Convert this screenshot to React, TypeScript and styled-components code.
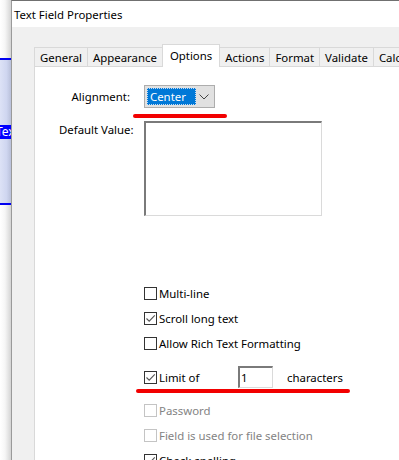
import React from 'react';
import styled, { createGlobalStyle } from 'styled-components';

const GlobalStyle = createGlobalStyle`
  body {
    margin: 0;
    font-family: "Noto Sans", "Open Sans", sans-serif;
    font-size: 11.4px;
    color: #000;
  }
`;

const tabs = ['General', 'Appearance', 'Options', 'Actions', 'Format', 'Validate', 'Calculate'];

const CheckMark = () => (
  <svg width="11" height="11" viewBox="0 0 11 11">
    <path d="M1.5 5.5 L4.2 8.2 L9.8 2.4" fill="none" stroke="#555" strokeWidth="1.1" />
  </svg>
);

const Check = ({ label, checked, disabled }: { label: string; checked?: boolean; disabled?: boolean }) => (
  <>
    <Box $disabled={disabled}>{checked && <CheckMark />}</Box>
    <CheckText $disabled={disabled}>{label}</CheckText>
  </>
);

const App = () => {
  return (
    <Screen>
      <GlobalStyle />
      <BackStrip>
        <Selection>
          <TagLabel>Text</TagLabel>
        </Selection>
      </BackStrip>
      <Dialog>
        <TitleBar>Text Field Properties</TitleBar>
        <Body>
          <TabRow>
            {tabs.map((t) => (
              <Tab key={t} $active={t === 'Options'}>
                {t}
              </Tab>
            ))}
          </TabRow>
          <Panel>
            <FormGrid>
              <FieldLabel>Alignment:</FieldLabel>
              <SelectWrap>
                <Select>
                  <SelectValue>Center</SelectValue>
                  <Chevron>
                    <svg width="10" height="6" viewBox="0 0 10 6">
                      <path d="M0.5 0.5 L5 5 L9.5 0.5" fill="none" stroke="#444" strokeWidth="1" />
                    </svg>
                  </Chevron>
                </Select>
                <RedMark $left={-11} $top={29} $width={94} />
              </SelectWrap>
              <FieldLabel $top>Default Value:</FieldLabel>
              <TextBox />
            </FormGrid>
            <CheckList>
              <CheckRow>
                <Check label="Multi-line" />
              </CheckRow>
              <CheckRow>
                <Check label="Scroll long text" checked />
              </CheckRow>
              <CheckRow>
                <Check label="Allow Rich Text Formatting" />
              </CheckRow>
              <CheckRow $tall>
                <Box>
                  <CheckMark />
                </Box>
                <LimitText>Limit of</LimitText>
                <NumberInput>1</NumberInput>
                <Suffix>characters</Suffix>
                <RedMark $left={-8} $top={33} $width={214} />
              </CheckRow>
              <CheckRow>
                <Check label="Password" disabled />
              </CheckRow>
              <CheckRow>
                <Check label="Field is used for file selection" disabled />
              </CheckRow>
              <CheckRow>
                <Check label="Check spelling" checked />
              </CheckRow>
            </CheckList>
          </Panel>
        </Body>
      </Dialog>
    </Screen>
  );
};

export default App;

const Screen = styled.div`
  display: flex;
  width: 399px;
  height: 460px;
  overflow: hidden;
`;

const BackStrip = styled.div`
  width: 11px;
  flex-shrink: 0;
  overflow: hidden;
  padding-top: 58px;
  background: linear-gradient(to right, #ffffff 0%, #f6f6f6 45%, #d4d4d4 100%);
`;

const Selection = styled.div`
  height: 143px;
  border-top: 2px solid #0000f0;
  border-bottom: 2px solid #0000f0;
  background: linear-gradient(to right, #dde2f6 0%, #cfd6f0 60%, #b9c0da 100%);
  display: flex;
  flex-direction: column;
  justify-content: center;
`;

const TagLabel = styled.div`
  background: #0000ff;
  color: #fff;
  font-size: 12px;
  line-height: 14px;
  margin-left: -4px;
  white-space: nowrap;
`;

const Dialog = styled.div`
  flex: 1;
  min-width: 0;
  display: flex;
  flex-direction: column;
  border-top: 1px solid #707070;
  border-left: 1px solid #9a9a9a;
`;

const TitleBar = styled.div`
  height: 26px;
  flex-shrink: 0;
  background: #fff;
  padding-left: 2px;
  display: flex;
  align-items: center;
`;

const Body = styled.div`
  flex: 1;
  display: flex;
  flex-direction: column;
  background: #f0f0f0;
  padding: 17px 0 0 22px;
`;

const TabRow = styled.div`
  display: flex;
  align-items: flex-end;
  height: 22px;
  position: relative;
  z-index: 1;
`;

const Tab = styled.div<{ $active?: boolean }>`
  height: ${(p) => (p.$active ? 23 : 19)}px;
  margin-bottom: ${(p) => (p.$active ? -1 : 0)}px;
  margin-right: -1px;
  box-sizing: border-box;
  padding: ${(p) => (p.$active ? '0 7px 2px' : '1px 5px 0')};
  display: flex;
  align-items: center;
  white-space: nowrap;
  border: 1px solid #d9d9d9;
  border-bottom: none;
  background: ${(p) => (p.$active ? '#fff' : '#f0f0f0')};
  position: relative;
  z-index: ${(p) => (p.$active ? 2 : 1)};
`;

const Panel = styled.div`
  flex: 1;
  margin-right: -60px;
  background: #fff;
  border: 1px solid #d9d9d9;
  padding: 18px 0 0 24px;
`;

const FormGrid = styled.div`
  display: grid;
  grid-template-columns: 71px auto;
  column-gap: 14px;
  row-gap: 13px;
  align-items: center;
`;

const FieldLabel = styled.div<{ $top?: boolean }>`
  text-align: right;
  white-space: nowrap;
  align-self: ${(p) => (p.$top ? 'start' : 'center')};
  margin-top: ${(p) => (p.$top ? 1 : 0)}px;
`;

const SelectWrap = styled.div`
  position: relative;
  width: 71px;
`;

const Select = styled.div`
  height: 23px;
  box-sizing: border-box;
  border: 1px solid #adadad;
  background: #e1e1e1;
  display: flex;
  align-items: center;
  padding: 2px;
`;

const SelectValue = styled.div`
  width: 49px;
  height: 17px;
  box-sizing: border-box;
  background: #0078d7;
  color: #fff;
  border: 1px dotted #c7dcf0;
  padding-left: 2px;
  display: flex;
  align-items: center;
`;

const Chevron = styled.div`
  flex: 1;
  display: flex;
  justify-content: center;
`;

const RedMark = styled.div<{ $left: number; $top: number; $width: number }>`
  position: absolute;
  left: ${(p) => p.$left}px;
  top: ${(p) => p.$top}px;
  width: ${(p) => p.$width}px;
  height: 4px;
  border-radius: 2px;
  background: #f20000;
`;

const TextBox = styled.div`
  width: 178px;
  height: 95px;
  box-sizing: border-box;
  border-top: 2px solid #7a7a7a;
  border-left: 2px solid #7a7a7a;
  border-right: 1px solid #dadada;
  border-bottom: 1px solid #dadada;
`;

const CheckList = styled.div`
  margin: 65px 0 0 85px;
  display: flex;
  flex-direction: column;
`;

const CheckRow = styled.div<{ $tall?: boolean }>`
  position: relative;
  height: ${(p) => (p.$tall ? 42 : 25)}px;
  display: flex;
  align-items: center;
  white-space: nowrap;
`;

const Box = styled.div<{ $disabled?: boolean }>`
  width: 13px;
  height: 13px;
  box-sizing: border-box;
  border: 1px solid ${(p) => (p.$disabled ? '#c4c4c4' : '#333')};
  background: #fff;
  display: flex;
  align-items: center;
  justify-content: center;
  flex-shrink: 0;
`;

const CheckText = styled.span<{ $disabled?: boolean }>`
  margin-left: 2px;
  color: ${(p) => (p.$disabled ? '#838383' : '#000')};
`;

const LimitText = styled.span`
  margin-left: 2px;
  width: 79px;
`;

const NumberInput = styled.div`
  width: 35px;
  height: 22px;
  box-sizing: border-box;
  border-top: 2px solid #7a7a7a;
  border-left: 2px solid #7a7a7a;
  border-right: 1px solid #dadada;
  border-bottom: 1px solid #dadada;
  padding-left: 1px;
  display: flex;
  align-items: center;
`;

const Suffix = styled.span`
  margin-left: 14px;
`;
